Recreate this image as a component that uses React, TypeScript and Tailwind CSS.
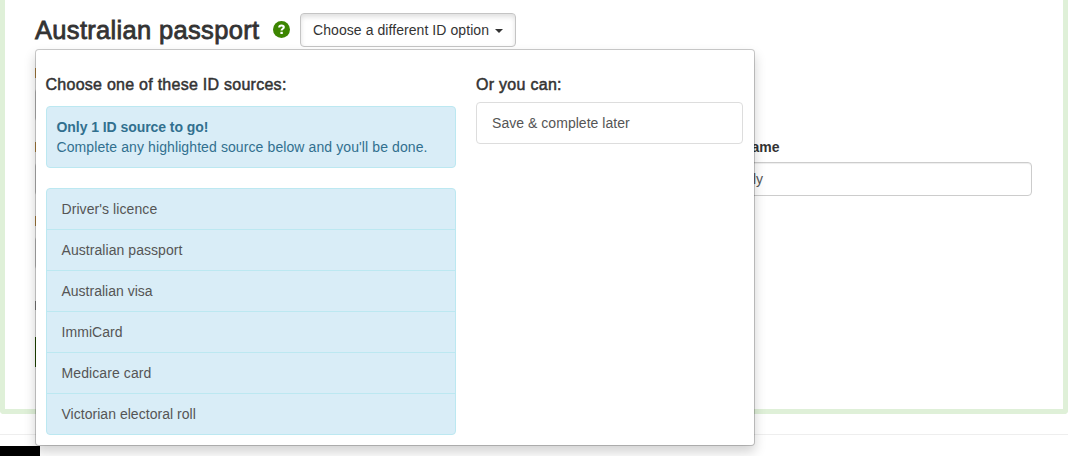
import React from "react";

const sources = [
  { label: "Driver's licence", tracking: "tracking-[0.08px]" },
  { label: "Australian passport", tracking: "tracking-[0.06px]" },
  { label: "Australian visa", tracking: "tracking-normal" },
  { label: "ImmiCard", tracking: "tracking-[0.06px]" },
  { label: "Medicare card", tracking: "tracking-[0.1px]" },
  { label: "Victorian electoral roll", tracking: "tracking-[0.03px]" },
];

function Field({ label, value }: { label?: string; value?: string }) {
  return (
    <div>
      <div className="mb-[5px] h-5 font-bold leading-5">
        {label ?? <div className="translate-y-[5px] h-[10px] w-px bg-[#bd8d45]" />}
      </div>
      <div className="h-[34px] rounded-[4px] border border-[#ccc] px-3 leading-8 text-[#555] shadow-[inset_0_1px_1px_rgba(0,0,0,0.075)]">
        {value}
      </div>
    </div>
  );
}

function HelpIcon() {
  return (
    <svg width="17" height="17" viewBox="0 0 17 17" className="mt-[21px] shrink-0">
      <circle cx="8.5" cy="8.5" r="8.5" fill="#3c8500" />
      <path d="M6.2 6.6C6.2 5.1 7.1 4.5 8.5 4.5c1.4 0 2.3.7 2.3 1.8 0 1.5-2.2 1.5-2.2 3.3" fill="none" stroke="#fff" strokeWidth="2.1" />
      <path d="M7.4 10.8h2.4v2.2H7.4z" fill="#fff" />
    </svg>
  );
}

function SourceMenu() {
  return (
    <div className="absolute left-[35px] top-[49px] z-10 flex h-[397px] w-[720px] rounded-[4px] border border-black/20 bg-white bg-clip-padding px-[10px] pt-[26px] shadow-[0_6px_12px_rgba(0,0,0,0.175)]">
      <div className="w-[410px]">
        <h4 className="-ml-[0.5px] h-[18px] whitespace-nowrap text-[16px] leading-[18px] tracking-[0.26px] [-webkit-text-stroke:0.5px_#333]">
          Choose one of these ID sources:
        </h4>
        <div className="mt-[12px] h-[62px] rounded-[4px] border border-[#bce8f1] bg-[#d9edf7] pl-[9.5px] pt-[10px] leading-5 text-[#31708f]">
          <strong className="block tracking-[-0.06px]">Only 1 ID source to go!</strong>
          <span className="whitespace-nowrap tracking-[0.1px]">Complete any highlighted source below and you'll be done.</span>
        </div>
        <ul className="mt-5 divide-y divide-[#bce8f1] rounded-[4px] border border-[#bce8f1] bg-[#d9edf7] text-[#555]">
          {sources.map((source) => (
            <li key={source.label} className="flex h-[41px] items-center pl-[14.5px] last:h-[40px]">
              <span className={source.tracking}>{source.label}</span>
            </li>
          ))}
        </ul>
      </div>
      <div className="ml-5 w-[267px]">
        <h4 className="h-[18px] text-[16px] leading-[18px] tracking-[0.28px] [-webkit-text-stroke:0.5px_#333]">Or you can:</h4>
        <div className="mt-[8px] flex h-[42px] items-center rounded-[4px] border border-[#ddd] px-[15px] tracking-[0.04px] text-[#555]">
          Save &amp; complete later
        </div>
      </div>
    </div>
  );
}

export default function App() {
  return (
    <div className="relative h-[456px] w-[1068px] overflow-hidden bg-white font-['Liberation_Sans',Arial,sans-serif] text-[14px] leading-5 text-[#333]">
      <main className="h-[414px] rounded-b-[4px] border-x-[5px] border-b-[5px] border-[#dff0d8] pr-[31px] pl-[30px]">
        <header className="flex h-[63px] items-start">
          <h2 className="mt-[16px] w-[238px] whitespace-nowrap text-[25.5px] leading-[29px] tracking-[0.32px] [-webkit-text-stroke:0.8px_#333]">
            Australian passport
          </h2>
          <HelpIcon />
          <button className="mt-[13px] ml-[10px] flex h-[34px] w-[216px] items-center rounded-[4px] border border-[#c4c4c4] pl-3 whitespace-nowrap tracking-[0.07px] shadow-[inset_0_3px_5px_rgba(0,0,0,0.125)]">
            Choose a different ID option
            <span className="mt-px ml-[6px] border-x-4 border-t-4 border-x-transparent border-t-[#333]" />
          </button>
        </header>
        <div className="grid grid-cols-3 gap-x-[30px] gap-y-[15px]">
          <div className="col-span-3 w-[312px]">
            <Field />
          </div>
          <Field />
          <Field />
          <Field label="Surname" value="Kelly" />
          <div className="col-span-3 w-[312px]">
            <Field />
          </div>
        </div>
        <div className="mt-[31px] h-[9px] w-px bg-[#888]" />
        <div className="mt-[27px] h-[30px] w-[100px] bg-[#245000]" />
      </main>
      <hr className="mt-5 border-t border-[#eee]" />
      <footer className="mt-[11px] h-[10px] w-10 bg-black" />
      <SourceMenu />
    </div>
  );
}
